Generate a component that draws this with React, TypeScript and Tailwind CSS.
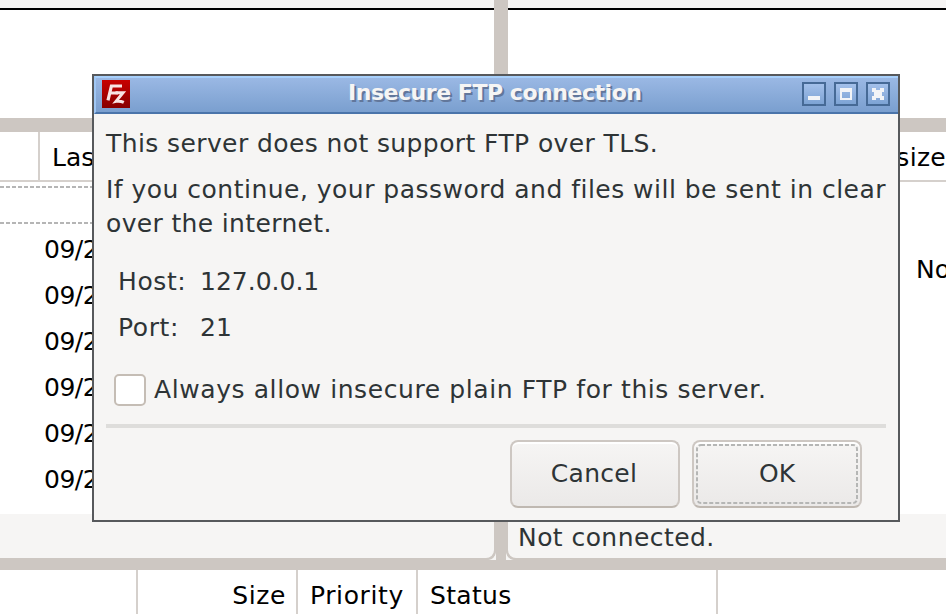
import React from "react";

const dates = ["09/2", "09/2", "09/2", "09/2", "09/2", "09/2"];

function AppIcon() {
  return (
    <svg viewBox="0 0 28 28" className="h-7 w-7 shrink-0">
      <defs>
        <linearGradient id="red" x1="0" y1="0" x2="0" y2="1">
          <stop offset="0" stopColor="#c80000" />
          <stop offset="1" stopColor="#870000" />
        </linearGradient>
      </defs>
      <rect width="28" height="28" fill="url(#red)" />
      <path d="M6 20.4 L9.4 6 H20 M8 13 H16" fill="none" stroke="#f8e3e3" strokeWidth="3.2" />
      <path d="M13.5 12.8 H21 L14 21.4 Q18 20.6 21.8 22.4" fill="none" stroke="#f8e3e3" strokeWidth="3" />
    </svg>
  );
}

function TitleButton({ children }: { children: React.ReactNode }) {
  return (
    <div className="h-6 w-6 border-2 border-[#466a96] bg-linear-to-b from-[#a3c0ea] to-[#7da3d4]">
      <svg viewBox="0 0 20 20" className="block h-5 w-5" shapeRendering="crispEdges">{children}</svg>
    </div>
  );
}

function Dialog() {
  return (
    <div className="absolute left-[92px] top-[74px] flex h-[448px] w-[808px] flex-col border-2 border-[#57595c] bg-[#f6f5f4] text-[#2e3436]">
      <div className="flex h-[38px] shrink-0 items-start border-b-2 border-l-2 border-t-2 border-b-[#4a74aa] border-l-[#a0c7f4] border-t-[#a8d0fb] bg-linear-to-b from-[#9ab8e4] to-[#7a9fcf] pl-1.5 pt-0.5">
        <div className="w-[90px]"><AppIcon /></div>
        <div className="flex-1 whitespace-nowrap pl-[156px] text-[22px] font-bold leading-[26px] tracking-[-0.46px] text-[#f6f5f4] [text-shadow:2px_2px_0_#62779b]">
          Insecure FTP connection
        </div>
        <div className="flex gap-2 pr-2 pt-0.5">
          <TitleButton><path d="M4 12H16V16H4Z" fill="#f2f4f7" /></TitleButton>
          <TitleButton><path d="M4 4H16V16H4ZM6 8V14H14V8Z" fillRule="evenodd" fill="#f2f4f7" /></TitleButton>
          <TitleButton><path d="M4 4H8V6H12V4H16V8H14V12H16V16H12V14H8V16H4V12H6V8H4Z" fill="#f2f4f7" /></TitleButton>
        </div>
      </div>
      <div className="flex flex-1 flex-col whitespace-nowrap px-3 pt-[13px]">
        <p className="tracking-[0.4px]">This server does not support FTP over TLS.</p>
        <p className="mt-3 tracking-[0.48px]">If you continue, your password and files will be sent in clear</p>
        <p className="tracking-[0.35px]">over the internet.</p>
        <div className="mt-6 grid grid-cols-[82px_auto] gap-y-3 pl-3">
          <span className="tracking-[0.6px]">Host:</span><span>127.0.0.1</span>
          <span className="tracking-[0.6px]">Port:</span><span>21</span>
        </div>
        <div className="mt-7 flex items-start gap-2 pl-2">
          <span className="mt-px h-8 w-8 rounded-[5px] border-2 border-[#c5bdb5] bg-white" />
          <span className="tracking-[0.59px]">Always allow insecure plain FTP for this server.</span>
        </div>
        <div className="mt-[17px] h-1 shrink-0 bg-[#dedddb]" />
        <div className="mt-3 flex justify-end gap-3 pr-6">
          <button className="h-[68px] w-[170px] rounded-lg border-2 border-[#cdc7c2] border-b-[#bfb8b1] bg-linear-to-b from-[#f6f5f4] to-[#ebe9e8] pr-0.5 tracking-[0.3px] shadow-[inset_0_2px_0_#fff]">Cancel</button>
          <button className="grid h-[68px] w-[170px] place-items-center rounded-lg border-2 border-[#cdc7c2] border-b-[#bfb8b1] bg-linear-to-b from-[#f6f5f4] to-[#ebe9e8] shadow-[inset_0_2px_0_#fff]">
            <svg viewBox="0 0 162 60" className="col-start-1 row-start-1 h-[60px] w-[162px]">
              <rect x="1" y="1" width="160" height="58" rx="4" fill="none" stroke="#b5b6b5" strokeWidth="2" strokeDasharray="4 2" />
            </svg>
            <span className="col-start-1 row-start-1">OK</span>
          </button>
        </div>
      </div>
    </div>
  );
}

const Dashes = () => (
  <div className="h-0.5 bg-[repeating-linear-gradient(90deg,#b5b5b5_0_4px,transparent_4px_6px)]" />
);

function Corner({ className }: { className: string }) {
  return (
    <svg viewBox="0 0 8 8" className={className}>
      <path d="M8 0V8H0Q7 7 8 0Z" fill="#f6f5f4" />
      <path d="M0 7Q6 6 7 0" fill="none" stroke="#cdc7c2" strokeWidth="1.5" />
    </svg>
  );
}

export default function App() {
  return (
    <div className="relative flex h-[614px] w-[946px] flex-col overflow-hidden bg-white font-['DejaVu_Sans',sans-serif] text-[25px] leading-[34px] text-black">
      <div className="flex h-[118px] shrink-0">
        <div className="w-[494px]"><div className="h-2.5 border-b-2 border-black bg-[#f6f5f4]" /></div>
        <div className="w-3.5 bg-[#cdc7c2]" />
        <div className="flex-1"><div className="h-2.5 border-b-2 border-black bg-[#f6f5f4]" /></div>
      </div>
      <div className="h-3.5 shrink-0 bg-[#cdc7c2]" />
      <div className="flex h-[426px] shrink-0 bg-[#cdc7c2]">
        <div className="flex w-[496px] flex-col">
          <div className="mr-0.5 flex h-[382px] flex-col bg-white">
            <div className="flex h-[50px] border-b-2 border-[#d5d0cc]">
              <div className="w-10 border-r-2 border-[#d5d0cc]" />
              <div className="pl-3 pt-[9px]">Las</div>
            </div>
            <div className="mt-1 flex h-[38px] flex-col justify-between"><Dashes /><Dashes /></div>
            <div className="mt-[9px] flex flex-col gap-3 pl-11">
              {dates.map((d, i) => <div key={i} className="-tracking-[0.5px]">{d}</div>)}
            </div>
          </div>
          <div className="relative mr-0.5 h-11 rounded-br-lg bg-[#f6f5f4]">
            <Corner className="absolute -bottom-0.5 -right-0.5 h-2 w-2" />
          </div>
        </div>
        <div className="w-2.5" />
        <div className="flex flex-1 flex-col pl-0.5">
          <div className="h-[382px] bg-white">
            <div className="flex h-[50px] justify-end border-b-2 border-[#d5d0cc] pt-[9px] tracking-[0.3px]">size</div>
            <div className="flex justify-end pt-[71px]"><span className="w-[30px]">No</span></div>
          </div>
          <div className="relative h-11 rounded-bl-lg bg-[#f6f5f4] pl-2.5 pt-[7px] tracking-[0.43px] text-[#2e3436]">
            Not connected.
            <Corner className="absolute -bottom-0.5 -left-0.5 h-2 w-2 -scale-x-100" />
          </div>
        </div>
      </div>
      <div className="h-3 shrink-0 bg-[#cdc7c2]" />
      <div className="flex h-11 shrink-0 [&>div]:pt-[9px]">
        <div className="w-[138px] border-r-2 border-[#d5d0cc]" />
        <div className="w-40 border-r-2 border-[#d5d0cc] pr-2.5 text-right tracking-[0.6px]">Size</div>
        <div className="w-[120px] border-r-2 border-[#d5d0cc] pl-3 tracking-[0.6px]">Priority</div>
        <div className="w-[300px] border-r-2 border-[#d5d0cc] pl-3 tracking-[0.3px]">Status</div>
      </div>
      <Dialog />
    </div>
  );
}
